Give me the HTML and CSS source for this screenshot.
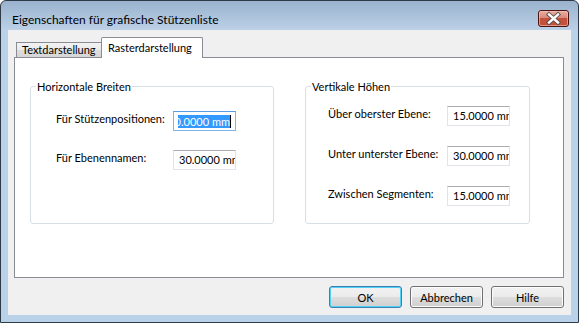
FILE: index.html
```html
<!DOCTYPE html>
<html lang="de">
<head>
<meta charset="utf-8">
<title>Eigenschaften für grafische Stützenliste</title>
<link rel="stylesheet" href="styles.css">
</head>
<body>
<div class="window">
  <div class="titlebar">
    <span class="title">Eigenschaften für grafische Stützenliste</span>
    <div class="close">
      <svg width="31" height="17" viewBox="0 0 31 17">
        <defs>
          <linearGradient id="cg" x1="0" y1="0" x2="0" y2="1">
            <stop offset="0" stop-color="#eab1a6"/>
            <stop offset="0.45" stop-color="#d98a7b"/>
            <stop offset="0.5" stop-color="#c4513c"/>
            <stop offset="1" stop-color="#c2503a"/>
          </linearGradient>
        </defs>
        <rect x="0.5" y="0.5" width="30" height="16" rx="2.5" fill="url(#cg)" stroke="#4a1410"/>
        <rect x="1.5" y="1.5" width="28" height="14" rx="1.5" fill="none" stroke="#f3c7bd" stroke-opacity="0.6"/>
        <path d="M11 4.5 L20 12.5 M20 4.5 L11 12.5" stroke="#5c4a48" stroke-width="4.2" stroke-linecap="square"/>
        <path d="M11 4.5 L20 12.5 M20 4.5 L11 12.5" stroke="#ffffff" stroke-width="2.4" stroke-linecap="square"/>
      </svg>
    </div>
  </div>
  <div class="client">
    <div class="tabs">
      <div class="tab">Textdarstellung</div>
      <div class="tab active">Rasterdarstellung</div>
    </div>
    <div class="panel">
      <fieldset class="group group-h">
        <legend>Horizontale Breiten</legend>
        <div class="rows">
          <div class="row">
            <span class="label">Für Stützenpositionen:</span>
            <div class="field focus"><div class="scroll"><span class="sel">30.0000 mm</span><span class="caret"></span></div></div>
          </div>
          <div class="row">
            <span class="label">Für Ebenennamen:</span>
            <div class="field">30.0000 mm</div>
          </div>
        </div>
      </fieldset>
      <fieldset class="group group-v">
        <legend>Vertikale Höhen</legend>
        <div class="rows">
          <div class="row">
            <span class="label">Über oberster Ebene:</span>
            <div class="field">15.0000 mm</div>
          </div>
          <div class="row">
            <span class="label">Unter unterster Ebene:</span>
            <div class="field">30.0000 mm</div>
          </div>
          <div class="row">
            <span class="label">Zwischen Segmenten:</span>
            <div class="field">15.0000 mm</div>
          </div>
        </div>
      </fieldset>
    </div>
    <div class="buttons">
      <button class="btn default">OK</button>
      <button class="btn">Abbrechen</button>
      <button class="btn">Hilfe</button>
    </div>
  </div>
</div>
</body>
</html>
```

FILE: styles.css
```css
html, body {
  margin: 0;
  padding: 0;
  background: #ffffff;
}

body {
  font-family: Lato, "Liberation Sans", sans-serif;
  font-size: 11px;
  color: #000000;
}

.window {
  width: 579px;
  height: 323px;
  box-sizing: border-box;
  border: 1px solid #2e3a46;
  border-radius: 6px 6px 0 0;
  background: linear-gradient(#9ab2cd 0, #bcd1e8 29px, #b9d1e9 30px, #b9d1e9 100%);
  display: flex;
  flex-direction: column;
  overflow: hidden;
}

.titlebar {
  height: 29px;
  flex: none;
  display: flex;
  align-items: flex-start;
  justify-content: space-between;
  padding: 0 9px 0 11px;
}

.title {
  font-size: 12px;
  padding-top: 11px;
  line-height: 15px;
  white-space: nowrap;
}

.close {
  margin-top: 9px;
  width: 31px;
  height: 17px;
}

.close svg {
  display: block;
}

.client {
  margin: 0 7px;
  height: 285px;
  box-sizing: border-box;
  background: #f0f0f0;
  padding: 7px 7px 0 6px;
}

.tabs {
  display: flex;
  align-items: flex-end;
  height: 20px;
  padding-left: 2px;
}

.tab {
  box-sizing: border-box;
  border: 1px solid #898c95;
  border-bottom: none;
  line-height: 14px;
  white-space: nowrap;
}

.tab:not(.active) {
  width: 85px;
  height: 15px;
  padding-left: 5px;
  background: linear-gradient(#f2f2f2, #ebebeb 50%, #dddddd 51%, #d6d6d6);
  border-right: none;
}

.tab.active {
  position: relative;
  z-index: 1;
  width: 102px;
  height: 21px;
  margin-bottom: -1px;
  padding: 3px 0 0 6px;
  background: #ffffff;
  border-radius: 2px 2px 0 0;
}

.panel {
  box-sizing: border-box;
  width: 550px;
  height: 221px;
  border: 1px solid #898c95;
  background: #ffffff;
  display: flex;
  align-items: flex-start;
  gap: 31px;
  padding: 21px 0 0 15px;
}

.group {
  box-sizing: border-box;
  margin: 0;
  padding: 0;
  height: 145px;
  border: 1px solid #d5dfe5;
  border-radius: 3px;
  min-width: 0;
}

.group legend {
  margin-left: 5px;
  padding: 0 1px;
  line-height: 15px;
}

.rows {
  display: flex;
  flex-direction: column;
}

.group-h {
  width: 244px;
}

.group-h .rows {
  padding: 17px 0 0 25px;
  gap: 19px;
}

.group-v {
  width: 225px;
}

.group-v .rows {
  padding: 12px 0 0 22px;
  gap: 20px;
}

.row {
  display: flex;
  align-items: flex-start;
}

.label {
  line-height: 16px;
  white-space: nowrap;
  flex: none;
}

.group-h .label {
  width: 117px;
}

.group-v .label {
  width: 119px;
}

.field {
  flex: none;
  box-sizing: border-box;
  width: 63px;
  height: 20px;
  border: 1px solid #e2e3ea;
  border-top-color: #abadb3;
  background: #ffffff;
  padding-left: 5px;
  line-height: 18px;
  white-space: nowrap;
  overflow: hidden;
}

.field.focus {
  border-color: #7eb4ea;
  border-top-color: #569de5;
  padding: 3px 4px 0 4px;
}

.scroll {
  display: flex;
  justify-content: flex-end;
  align-items: flex-start;
  overflow: hidden;
  height: 14px;
}

.sel {
  flex: none;
  background: #3399ff;
  color: #ffffff;
  line-height: 13px;
  height: 13px;
}

.caret {
  flex: none;
  width: 1px;
  height: 14px;
  margin-top: -1px;
  background: #000000;
}

.buttons {
  display: flex;
  justify-content: flex-end;
  gap: 8px;
  margin-top: 8px;
  width: 550px;
}

.btn {
  box-sizing: border-box;
  width: 73px;
  height: 22px;
  margin: 0;
  padding: 0;
  font: inherit;
  color: #000000;
  border: 1px solid #707070;
  border-radius: 3px;
  background: linear-gradient(#f2f2f2, #ebebeb 50%, #dddddd 51%, #cfcfcf);
  box-shadow: inset 0 0 0 1px #fcfcfc;
}

.btn.default {
  border-color: #3c7fb1;
  box-shadow: inset 0 0 0 1px #4fd1f8;
}
```
